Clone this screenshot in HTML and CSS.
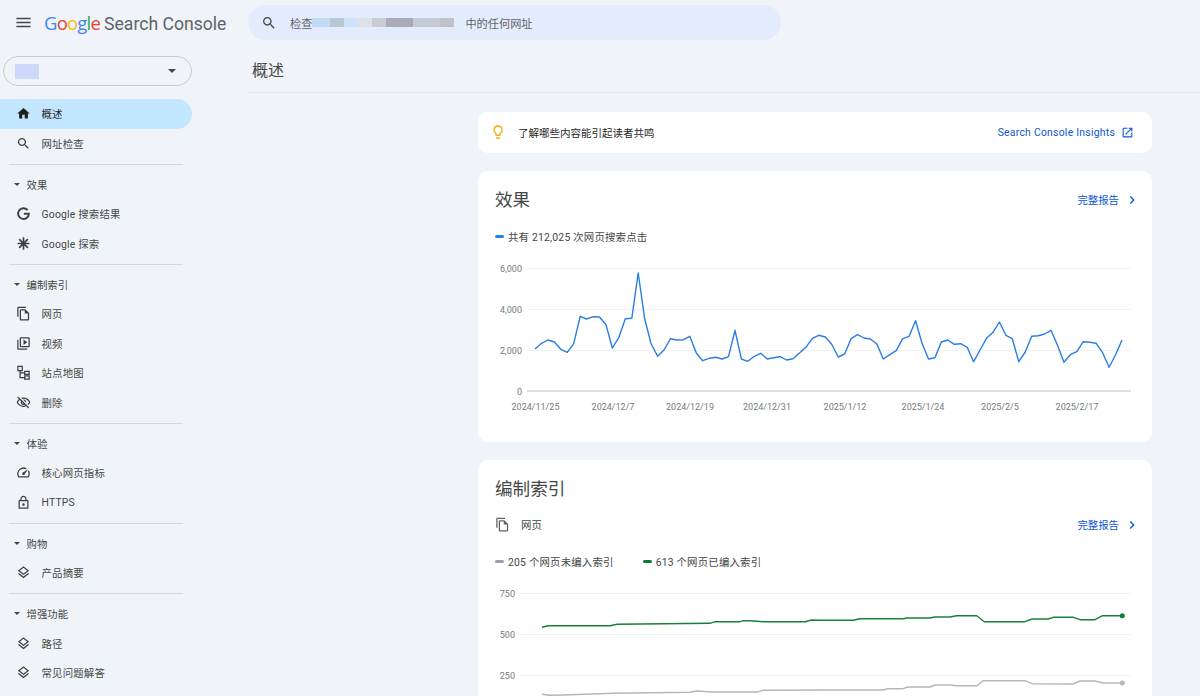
FILE: index.html
```html
<!DOCTYPE html>
<html lang="zh-CN">
<head>
    <meta charset="UTF-8">
    <meta name="viewport" content="width=device-width, initial-scale=1.0">
    <title>概述 - Search Console</title>
    <link rel="stylesheet" href="styles.css">
</head>
<body>
    <svg class="icon-defs" aria-hidden="true">
        <symbol id="i-menu" viewBox="0 0 24 24"><path d="M3 18h18v-2H3v2zm0-5h18v-2H3v2zm0-7v2h18V6H3z"/></symbol>
        <symbol id="i-search" viewBox="0 0 24 24"><path d="M15.5 14h-.79l-.28-.27C15.41 12.59 16 11.11 16 9.5 16 5.91 13.09 3 9.5 3S3 5.91 3 9.5 5.91 16 9.5 16c1.61 0 3.09-.59 4.23-1.57l.27.28v.79l5 4.99L20.49 19l-4.99-5zm-6 0C7.01 14 5 11.99 5 9.5S7.01 5 9.5 5 14 7.01 14 9.5 11.99 14 9.5 14z"/></symbol>
        <symbol id="i-home" viewBox="0 0 24 24"><path d="M10 20v-6h4v6h5v-8h3L12 3 2 12h3v8z"/></symbol>
        <symbol id="i-g" viewBox="0 0 24 24"><path d="M18.6 6.6A8.6 8.6 0 1 0 20.6 12.4h-8" fill="none" stroke="currentColor" stroke-width="3"/></symbol>
        <symbol id="i-discover" viewBox="0 0 24 24"><path d="M12 2v20M2.5 12h19M5 5l14 14M19 5L5 19" fill="none" stroke="currentColor" stroke-width="2.6"/></symbol>
        <symbol id="i-pages" viewBox="0 0 24 24"><path d="M16 1H4c-1.1 0-2 .9-2 2v14h2V3h12V1zm-1 4H8c-1.1 0-1.99.9-1.99 2L6 21c0 1.1.89 2 1.99 2H19c1.1 0 2-.9 2-2V11l-6-6zM8 21V7h6v5h5v9H8z"/></symbol>
        <symbol id="i-video" viewBox="0 0 24 24"><path d="M4 6H2v14c0 1.1.9 2 2 2h14v-2H4V6zm16-4H8c-1.1 0-2 .9-2 2v12c0 1.1.9 2 2 2h12c1.1 0 2-.9 2-2V4c0-1.1-.9-2-2-2zm0 14H8V4h12v12zM12 5.5v9l6-4.5z"/></symbol>
        <symbol id="i-sitemap" viewBox="0 0 24 24"><path d="M3 2h7v7H3zM14 10h7v5h-7zM14 17.500h7v5h-7zM6.500 9v11H14M6.500 12.500H14" fill="none" stroke="currentColor" stroke-width="2"/></symbol>
        <symbol id="i-removal" viewBox="0 0 24 24"><path d="M12 6c3.79 0 7.17 2.13 8.82 5.5-.59 1.22-1.42 2.27-2.41 3.12l1.41 1.41c1.39-1.23 2.49-2.77 3.18-4.53C21.27 7.11 17 4 12 4c-1.27 0-2.49.2-3.64.57l1.65 1.65C10.66 6.09 11.32 6 12 6zm-1.07 1.14L13 9.21c.57.25 1.03.71 1.28 1.28l2.07 2.07c.08-.34.14-.7.14-1.07C16.5 9.01 14.48 7 12 7c-.37 0-.72.05-1.07.14zM2.010 3.870l2.68 2.68C3.060 7.830 1.770 9.530 1 11.500 2.730 15.890 7 19 12 19c1.520 0 2.980-.29 4.320-.82l3.420 3.420 1.410-1.410L3.420 2.450 2.010 3.870zm7.500 7.500l2.610 2.610c-.04.01-.08.02-.12.02-1.380 0-2.500-1.120-2.500-2.500 0-.05.01-.08.01-.13zm-3.400-3.400l1.750 1.750c-.23.55-.36 1.150-.36 1.780 0 2.480 2.020 4.500 4.500 4.500.63 0 1.230-.13 1.770-.36l.98.98c-.88.24-1.800.38-2.750.38-3.790 0-7.170-2.130-8.820-5.500.7-1.430 1.720-2.610 2.930-3.530z"/></symbol>
        <symbol id="i-speed" viewBox="0 0 24 24"><path d="M20.380 8.570l-1.230 1.850a8 8 0 0 1-.22 7.580H5.070A8 8 0 0 1 15.580 6.850l1.850-1.230A10 10 0 0 0 3.350 19a2 2 0 0 0 1.720 1h13.850a2 2 0 0 0 1.740-1 10 10 0 0 0-.27-10.440zm-9.790 6.840a2 2 0 0 0 2.830 0l5.660-8.490-8.490 5.660a2 2 0 0 0 0 2.830z"/></symbol>
        <symbol id="i-lock" viewBox="0 0 24 24"><path d="M18 8h-1V6c0-2.760-2.240-5-5-5S7 3.240 7 6v2H6c-1.100 0-2 .9-2 2v10c0 1.100.9 2 2 2h12c1.100 0 2-.9 2-2V10c0-1.100-.9-2-2-2zM9 6c0-1.660 1.340-3 3-3s3 1.340 3 3v2H9V6zm9 14H6V10h12v10zm-6-3c1.100 0 2-.9 2-2s-.9-2-2-2-2 .9-2 2 .9 2 2 2z"/></symbol>
        <symbol id="i-layers" viewBox="0 0 24 24"><path d="M11.990 18.540l-7.370-5.730L3 14.070l9 7 9-7-1.630-1.270-7.380 5.740zM12 16l7.360-5.730L21 9l-9-7-9 7 1.630 1.270L12 16zm0-11.470L17.740 9 12 13.470 6.260 9 12 4.530z"/></symbol>
        <symbol id="i-bulb" viewBox="0 0 24 24"><path d="M9 21c0 .55.45 1 1 1h4c.55 0 1-.45 1-1v-1H9v1zm3-19C8.140 2 5 5.140 5 9c0 2.380 1.190 4.470 3 5.740V17c0 .55.45 1 1 1h6c.55 0 1-.45 1-1v-2.260c1.810-1.270 3-3.360 3-5.740 0-3.860-3.140-7-7-7zm2.850 11.100l-.85.6V16h-4v-2.300l-.85-.6C7.800 12.160 7 10.630 7 9c0-2.760 2.240-5 5-5s5 2.240 5 5c0 1.630-.8 3.160-2.150 4.100z"/></symbol>
        <symbol id="i-open" viewBox="0 0 24 24"><path d="M19 19H5V5h7V3H5c-1.110 0-2 .9-2 2v14c0 1.100.89 2 2 2h14c1.100 0 2-.9 2-2v-7h-2v7zM14 3v2h3.590l-9.830 9.830 1.410 1.410L19 6.410V10h2V3h-7z"/></symbol>
        <symbol id="i-chevron" viewBox="0 0 24 24"><path d="M10 6L8.590 7.410 13.170 12l-4.580 4.590L10 18l6-6z"/></symbol>
    </svg>

    <header class="topbar">
        <div class="brand">
            <svg class="menu-icon"><use href="#i-menu"/></svg>
            <span class="logo">
                <span class="logo-google"><span class="g-blue">G</span><span class="g-red">o</span><span class="g-yellow">o</span><span class="g-blue">g</span><span class="g-green">l</span><span class="g-red">e</span></span>
                <span class="logo-product">Search Console</span>
            </span>
        </div>
        <div class="search">
            <svg class="search-icon"><use href="#i-search"/></svg>
            <span>检查</span>
            <span class="mosaic">
                <i class="m1"></i><i class="m2"></i><i class="m3"></i><i class="m4"></i><i class="m5"></i><i class="m6"></i><i class="m7"></i><i class="m8"></i>
            </span>
            <span>中的任何网址</span>
        </div>
    </header>

    <div class="layout">
        <nav class="sidebar">
            <div class="property">
                <span class="property-mask"></span>
                <span class="caret property-caret"></span>
            </div>

            <a class="nav-item active"><svg><use href="#i-home"/></svg>概述</a>
            <a class="nav-item"><svg><use href="#i-search"/></svg>网址检查</a>
            <hr class="nav-rule">

            <div class="nav-head"><span class="caret"></span>效果</div>
            <a class="nav-item"><svg><use href="#i-g"/></svg>Google 搜索结果</a>
            <a class="nav-item"><svg><use href="#i-discover"/></svg>Google 探索</a>
            <hr class="nav-rule">

            <div class="nav-head"><span class="caret"></span>编制索引</div>
            <a class="nav-item"><svg><use href="#i-pages"/></svg>网页</a>
            <a class="nav-item"><svg><use href="#i-video"/></svg>视频</a>
            <a class="nav-item"><svg><use href="#i-sitemap"/></svg>站点地图</a>
            <a class="nav-item"><svg><use href="#i-removal"/></svg>删除</a>
            <hr class="nav-rule">

            <div class="nav-head"><span class="caret"></span>体验</div>
            <a class="nav-item"><svg><use href="#i-speed"/></svg>核心网页指标</a>
            <a class="nav-item"><svg><use href="#i-lock"/></svg>HTTPS</a>
            <hr class="nav-rule">

            <div class="nav-head"><span class="caret"></span>购物</div>
            <a class="nav-item"><svg><use href="#i-layers"/></svg>产品摘要</a>
            <hr class="nav-rule">

            <div class="nav-head"><span class="caret"></span>增强功能</div>
            <a class="nav-item"><svg><use href="#i-layers"/></svg>路径</a>
            <a class="nav-item"><svg><use href="#i-layers"/></svg>常见问题解答</a>
        </nav>

        <main class="main">
            <h1 class="page-title">概述</h1>

            <div class="cards">
                <section class="card insight">
                    <svg class="bulb"><use href="#i-bulb"/></svg>
                    <span class="insight-text">了解哪些内容能引起读者共鸣</span>
                    <a class="link insight-link">Search Console Insights<svg><use href="#i-open"/></svg></a>
                </section>

                <section class="card perf">
                    <div class="card-head">
                        <h2>效果</h2>
                        <a class="link">完整报告<svg><use href="#i-chevron"/></svg></a>
                    </div>
                    <div class="legend">
                        <span class="legend-entry"><i class="swatch blue"></i>共有 212,025 次网页搜索点击</span>
                    </div>
                    <svg class="chart chart-perf" viewBox="0 0 674 160">
                        <g class="grid">
                            <path d="M49 9.500H653M49 50.500H653M49 91.500H653"/>
                            <path class="axis" d="M49 132H653"/>
                        </g>
                        <g class="y-labels">
                            <text x="44" y="12.500">6,000</text>
                            <text x="44" y="53.500">4,000</text>
                            <text x="44" y="94.500">2,000</text>
                            <text x="44" y="135.500">0</text>
                        </g>
                        <g class="x-labels">
                            <text x="57.500" y="150.500">2024/11/25</text>
                            <text x="135" y="150.500">2024/12/7</text>
                            <text x="212" y="150.500">2024/12/19</text>
                            <text x="289" y="150.500">2024/12/31</text>
                            <text x="367" y="150.500">2025/1/12</text>
                            <text x="445" y="150.500">2025/1/24</text>
                            <text x="522" y="150.500">2025/2/5</text>
                            <text x="599" y="150.500">2025/2/17</text>
                        </g>
                        <polyline class="line line-blue" points="57,90 63.500,84.300 69.900,81 76.400,83 82.800,90.300 89.300,93.300 95.700,84.700 102.200,57.300 108.600,60 115.100,57.700 121.500,58 128,65.700 134.400,89 140.900,78.300 147.300,59.700 153.800,59.300 160.200,14 166.700,60 173.100,84.700 179.600,97.300 186,91 192.500,79.700 198.900,81 205.400,80.700 211.800,77.300 218.300,94 224.700,101.700 231.200,99.300 237.600,98.300 244.100,100 250.500,97.700 257,71.300 263.400,100 269.900,102.300 276.300,97.300 282.800,94.300 289.200,100 295.700,98.700 302.100,97.700 308.600,101 315,99.700 321.500,94 327.900,88.300 334.400,79.300 340.800,76.300 347.300,78 353.700,85.300 360.200,98 366.600,95 373.100,79.700 379.500,75.700 386,79 392.400,80 398.900,85 405.300,100 411.800,95.700 418.200,91.700 424.700,79.700 431.100,77.300 437.600,61.700 444,84.300 450.500,100 456.900,98.700 463.400,83 469.800,81 476.300,85.300 482.700,84.700 489.200,88.300 495.600,102.700 502.100,91 508.500,79.300 515,73.300 521.400,63 527.900,76.300 534.300,79.700 540.800,102.700 547.200,93 553.700,77.300 560.100,76.700 566.600,75 573,71.300 579.500,86.300 585.900,103.300 592.400,95.700 598.800,92.700 605.300,82.700 611.700,83.300 618.200,84.300 624.600,93.700 631.100,108.300 637.500,96 644,81"/>
                    </svg>
                </section>

                <section class="card index">
                    <h2>编制索引</h2>
                    <div class="sub-head">
                        <span class="sub-title"><svg><use href="#i-pages"/></svg>网页</span>
                        <a class="link">完整报告<svg><use href="#i-chevron"/></svg></a>
                    </div>
                    <div class="legend legend-index">
                        <span class="legend-entry"><i class="swatch grey"></i>205 个网页未编入索引</span>
                        <span class="legend-entry"><i class="swatch green"></i>613 个网页已编入索引</span>
                    </div>
                    <svg class="chart chart-index" viewBox="0 0 674 111">
                        <g class="grid">
                            <path d="M42 8.500H653M42 49.500H653M42 90.500H653"/>
                        </g>
                        <g class="y-labels">
                            <text x="37" y="11.500">750</text>
                            <text x="37" y="52.500">500</text>
                            <text x="37" y="93.500">250</text>
                        </g>
                        <polyline class="line line-grey" points="64,109.300 72,110.300 85,110 135,108.300 212,107.300 219,106 235,107 279,107 285,105.300 342,105 404,105 410,103.700 425,103.700 430,102 452,102 457,100 472,100 479,100.700 499,100.700 505,95.700 547,95.700 554,98.700 595,99 602,96 617,96 625,98 644,98"/>
                        <circle class="dot-grey" cx="644.300" cy="98" r="2.500"/>
                        <polyline class="line line-green" points="64,42.300 70.300,40.700 132,40.700 139.300,39.300 232,38.300 237,36.700 262,36.700 265.300,35.700 272,35.700 285.300,36.700 327,36.700 333.700,35 342,35.300 375.300,35.300 382,33.700 425.300,33.700 428.700,33 452,33 457,32 472,32 478.700,30.700 498.700,30.700 506.300,36.700 547,36.700 554.300,34 570.300,34 575.300,32.300 595.300,32.300 602,34.700 617,34.700 624.700,30.700 644.300,30.700"/>
                        <circle class="dot-green" cx="644.300" cy="30.700" r="2.500"/>
                    </svg>
                </section>
            </div>
        </main>
    </div>
</body>
</html>
```

FILE: styles.css
```css
* {
    box-sizing: border-box;
}
html, body {
    height: 100%;
}
body {
    margin: 0;
    background-color: #f0f4f9;
    color: #444746;
    font-family: Roboto, "Noto Sans CJK SC", sans-serif;
    font-size: 10.4px;
    overflow: hidden;
}
svg {
    fill: currentColor;
}
.icon-defs {
    display: none;
}

/* top bar */
.topbar {
    display: flex;
    align-items: center;
    height: 45px;
}
.brand {
    display: flex;
    align-items: center;
    width: 248px;
    flex-shrink: 0;
    padding-left: 14px;
}
.menu-icon {
    width: 19px;
    height: 19px;
    margin-right: 11px;
    color: #444746;
}
.logo {
    display: flex;
    align-items: baseline;
    gap: 4px;
    white-space: nowrap;
}
.logo-google {
    font-family: "Open Sans", sans-serif;
    font-size: 18.5px;
    letter-spacing: -0.8px;
}
.logo-product {
    font-family: Roboto, sans-serif;
    font-size: 17.6px;
    color: #5f6368;
}
.g-blue { color: #4285f4; }
.g-red { color: #ea4335; }
.g-yellow { color: #fbbc05; }
.g-green { color: #34a853; }

.search {
    display: flex;
    align-items: center;
    width: 533px;
    height: 35px;
    padding-left: 13px;
    border-radius: 18px;
    background-color: #e2ecfc;
    color: #5f6368;
    font-size: 11.2px;
}
.search-icon {
    width: 16px;
    height: 16px;
    margin-right: 13px;
    color: #444746;
}
.mosaic {
    display: flex;
    height: 9px;
    width: 142px;
    margin-right: 11px;
}
.mosaic i {
    display: block;
    height: 100%;
}
.m1 { width: 18px; background: #bfdcf4; }
.m2 { width: 14px; background: #b8c9d4; }
.m3 { width: 13px; background: #cfe2fb; }
.m4 { width: 15px; background: #dde1e8; }
.m5 { width: 14px; background: #c8ccd6; }
.m6 { width: 27px; background: #a9acb8; }
.m7 { width: 27px; background: #c4cad6; }
.m8 { width: 14px; background: #bfc3c9; }

/* sidebar */
.layout {
    display: flex;
}
.sidebar {
    width: 248px;
    flex-shrink: 0;
    padding-top: 11px;
}
.property {
    display: flex;
    align-items: center;
    justify-content: space-between;
    width: 189px;
    height: 30px;
    margin: 0 0 13px 3px;
    padding: 0 15px 0 11px;
    border: 1px solid #c7c9cc;
    border-radius: 15px;
}
.property-mask {
    width: 24px;
    height: 15px;
    background-color: #ccd9fb;
}
.caret {
    width: 0;
    height: 0;
    border-left: 3px solid transparent;
    border-right: 3px solid transparent;
    border-top: 3px solid #444746;
}
.property-caret {
    border-width: 4px 4px 0;
}
.nav-item {
    display: flex;
    align-items: center;
    width: 192px;
    height: 29.6px;
    padding-left: 16px;
    border-radius: 0 15px 15px 0;
    white-space: nowrap;
    letter-spacing: 0.2px;
}
.nav-item svg {
    width: 15px;
    height: 15px;
    margin-right: 10.500px;
    color: #3c4043;
    flex-shrink: 0;
}
.nav-item.active {
    background-color: #c2e7ff;
    color: #1f1f1f;
}
.nav-item.active svg {
    color: #1f1f1f;
}
.nav-head {
    display: flex;
    align-items: center;
    height: 29.6px;
    padding-left: 13.500px;
}
.nav-head .caret {
    margin-right: 7px;
}
.nav-rule {
    width: 174px;
    height: 1px;
    margin: 5.800px 0 4.400px 9px;
    border: 0;
    background-color: #d3d6da;
}

/* main column */
.main {
    flex: 1;
    min-width: 0;
}
.page-title {
    height: 48px;
    margin: 0 0 18.500px;
    padding: 15px 0 0 4px;
    border-bottom: 1px solid #e3e6ea;
    color: #444746;
    font-size: 16px;
    font-weight: 400;
    line-height: 22px;
}
.cards {
    display: flex;
    flex-direction: column;
    gap: 18px;
    width: 674px;
    margin-left: 230px;
}
.card {
    border-radius: 10px;
    background-color: #fff;
}
.insight {
    display: flex;
    align-items: center;
    height: 41px;
    padding: 0 18px 0 12px;
    color: #1f1f1f;
}
.bulb {
    width: 16px;
    height: 16px;
    margin-right: 12px;
    color: #f9ab00;
}
.insight-text {
    flex: 1;
    font-size: 10.5px;
}
.link {
    display: flex;
    align-items: center;
    color: #0b57d0;
    white-space: nowrap;
}
.link svg {
    width: 16px;
    height: 16px;
    margin-left: 5px;
    margin-right: -1px;
}
.insight-link {
    letter-spacing: 0.25px;
}
.insight-link svg {
    width: 13px;
    height: 13px;
    margin-left: 6px;
    margin-right: 0;
}

.perf {
    height: 271px;
}
.card-head {
    display: flex;
    align-items: center;
    justify-content: space-between;
    height: 26px;
    margin-top: 0;
    padding: 16px 13px 0 17px;
    box-sizing: content-box;
}
.card h2 {
    margin: 0;
    color: #444746;
    font-size: 17.600px;
    font-weight: 400;
    line-height: 26px;
}
.legend {
    display: flex;
    align-items: center;
    height: 16px;
    margin-top: 16px;
    padding-left: 17px;
    color: #444746;
}
.legend-entry {
    display: flex;
    align-items: center;
    letter-spacing: 0.2px;
}
.swatch {
    display: block;
    width: 9px;
    height: 3px;
    margin-right: 4px;
    border-radius: 2px;
}
.swatch.blue { background-color: #2a7de1; }
.swatch.grey { background-color: #9aa0a6; }
.swatch.green { background-color: #0b7a3b; }
.chart {
    display: block;
    width: 674px;
}
.chart-perf {
    height: 160px;
    margin-top: 14px;
}
.chart-index {
    height: 111px;
    margin-top: 15px;
}
.grid path {
    fill: none;
    stroke: #f1f2f3;
    stroke-width: 1;
}
.grid .axis {
    stroke: #bdbdbd;
}
.chart text {
    fill: #777b80;
    font-size: 9px;
    font-family: Roboto, sans-serif;
}
.y-labels text {
    text-anchor: end;
}
.x-labels text {
    text-anchor: middle;
}
.line {
    fill: none;
    stroke-width: 1.400;
    stroke-linejoin: round;
}
.line-blue { stroke: #2a7de1; }
.line-green { stroke: #188038; }
.line-grey { stroke: #b4b6b9; }
.dot-green { fill: #0b7a3b; }
.dot-grey { fill: #b4b6b9; }

.index {
    height: 260px;
    padding-top: 16px;
}
.index h2 {
    padding-left: 17px;
}
.sub-head {
    display: flex;
    align-items: center;
    justify-content: space-between;
    height: 18px;
    margin-top: 14px;
    padding: 0 13px 0 17px;
}
.sub-title {
    display: flex;
    align-items: center;
}
.sub-title svg {
    width: 15px;
    height: 15px;
    margin-right: 11px;
    color: #5f6368;
}
.legend-index {
    gap: 29px;
    margin-top: 20px;
}
```
